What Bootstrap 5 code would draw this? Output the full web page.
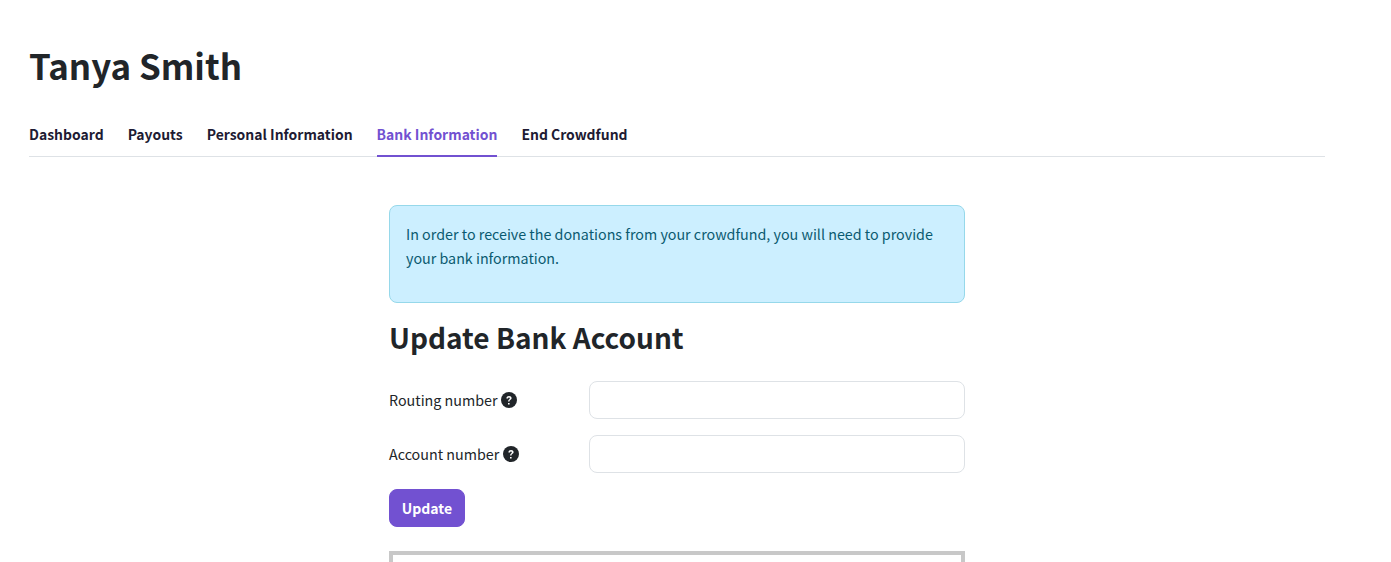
<!DOCTYPE html>
<html lang="en">
<head>
<meta charset="utf-8">
<title>Bank Information</title>
<link href="https://cdn.jsdelivr.net/npm/bootstrap@5.3.0/dist/css/bootstrap.min.css" rel="stylesheet">
<style>
html, body { height: 562px; overflow: hidden; }
body { font-family: "Noto Sans CJK SC", "Noto Sans", sans-serif; font-size: 14.3px; color: #212529; background: #fff; }
.page-wrap { width: 1296px; margin-left: 29px; padding-top: 39px; }
.owner-name { font-size: 34.9px; line-height: 52px; font-weight: 600; margin: 0 0 31px; color: #212529; }
.tab-row { border-bottom: 1px solid #dee2e6; gap: 24px; }
.tab-row .nav-link { padding: 0 0 9px; font-weight: 600; font-size: 13.95px; line-height: 24px; color: #1e1b33; border-bottom: 2px solid transparent; margin-bottom: -1px; }
.tab-row .nav-link.active { color: #7251d1; border-bottom-color: #7251d1; }
.form-area { width: 576px; margin: 48px 0 0 360px; }
.info-note { height: 98px; padding: 16px; margin-bottom: 16px; background: #ccefff; border: 1px solid #96d8ea; border-radius: 8px; color: #0a5a70; line-height: 23.5px; }
.section-title { font-size: 28px; line-height: 36px; font-weight: 600; margin: 0 0 26px; color: #212529; }
.field-row { height: 38px; margin-bottom: 16px; }
.field-label { width: 200px; flex: none; margin: 0; }
.field-input { border-radius: 8px; height: 38px; }
.help-dot { width: 16px; height: 16px; vertical-align: -2px; margin-left: .4px; }
.save-btn { background: #7251d1; border-color: #7251d1; color: #fff; font-weight: 600; font-size: 14px; border-radius: 8px; width: 76px; height: 38px; padding: 0; }
.save-btn:hover { background: #6445bd; border-color: #6445bd; color: #fff; }
.frame-box { height: 60px; margin-top: 24px; border: 4px solid #c8c8c8; border-bottom: 0; }
</style>
</head>
<body>
<div class="page-wrap">
  <h1 class="owner-name">Tanya Smith</h1>
  <ul class="nav tab-row">
    <li class="nav-item"><a class="nav-link" href="#">Dashboard</a></li>
    <li class="nav-item"><a class="nav-link" href="#">Payouts</a></li>
    <li class="nav-item"><a class="nav-link" href="#">Personal Information</a></li>
    <li class="nav-item"><a class="nav-link active" href="#">Bank Information</a></li>
    <li class="nav-item"><a class="nav-link" href="#">End Crowdfund</a></li>
  </ul>
  <div class="form-area">
    <div class="info-note" role="alert">In order to receive the donations from your crowdfund, you will need to provide your bank information.</div>
    <h2 class="section-title">Update Bank Account</h2>
    <form>
      <div class="d-flex align-items-center field-row">
        <label class="field-label" for="routing">Routing number
          <svg class="help-dot" viewBox="0 0 16 16" aria-hidden="true"><circle cx="8" cy="8" r="8" fill="#212529"/><path d="M5.4 6.2C5.5 4.7 6.6 4 8 4c1.500 0 2.600.8 2.600 2.100 0 1-.6 1.500-1.300 2-.6.4-.8.6-.8 1.200v.3H7.100V9.200c0-.9.4-1.400 1-1.800.5-.4.8-.6.8-1.100 0-.5-.4-.8-.9-.8-.6 0-1 .4-1 .9H5.400zM7 11.100h1.600v1.500H7z" fill="#fff"/></svg>
        </label>
        <input class="form-control field-input" id="routing" type="text">
      </div>
      <div class="d-flex align-items-center field-row">
        <label class="field-label" for="account">Account number
          <svg class="help-dot" viewBox="0 0 16 16" aria-hidden="true"><circle cx="8" cy="8" r="8" fill="#212529"/><path d="M5.4 6.2C5.5 4.7 6.6 4 8 4c1.500 0 2.600.8 2.600 2.100 0 1-.6 1.500-1.300 2-.6.4-.8.6-.8 1.200v.3H7.100V9.200c0-.9.4-1.400 1-1.800.5-.4.8-.6.8-1.100 0-.5-.4-.8-.9-.8-.6 0-1 .4-1 .9H5.400zM7 11.100h1.600v1.500H7z" fill="#fff"/></svg>
        </label>
        <input class="form-control field-input" id="account" type="text">
      </div>
      <button type="button" class="btn save-btn">Update</button>
    </form>
    <div class="frame-box"></div>
  </div>
</div>
<script src="https://cdn.jsdelivr.net/npm/bootstrap@5.3.0/dist/js/bootstrap.bundle.min.js"></script>
</body>
</html>
